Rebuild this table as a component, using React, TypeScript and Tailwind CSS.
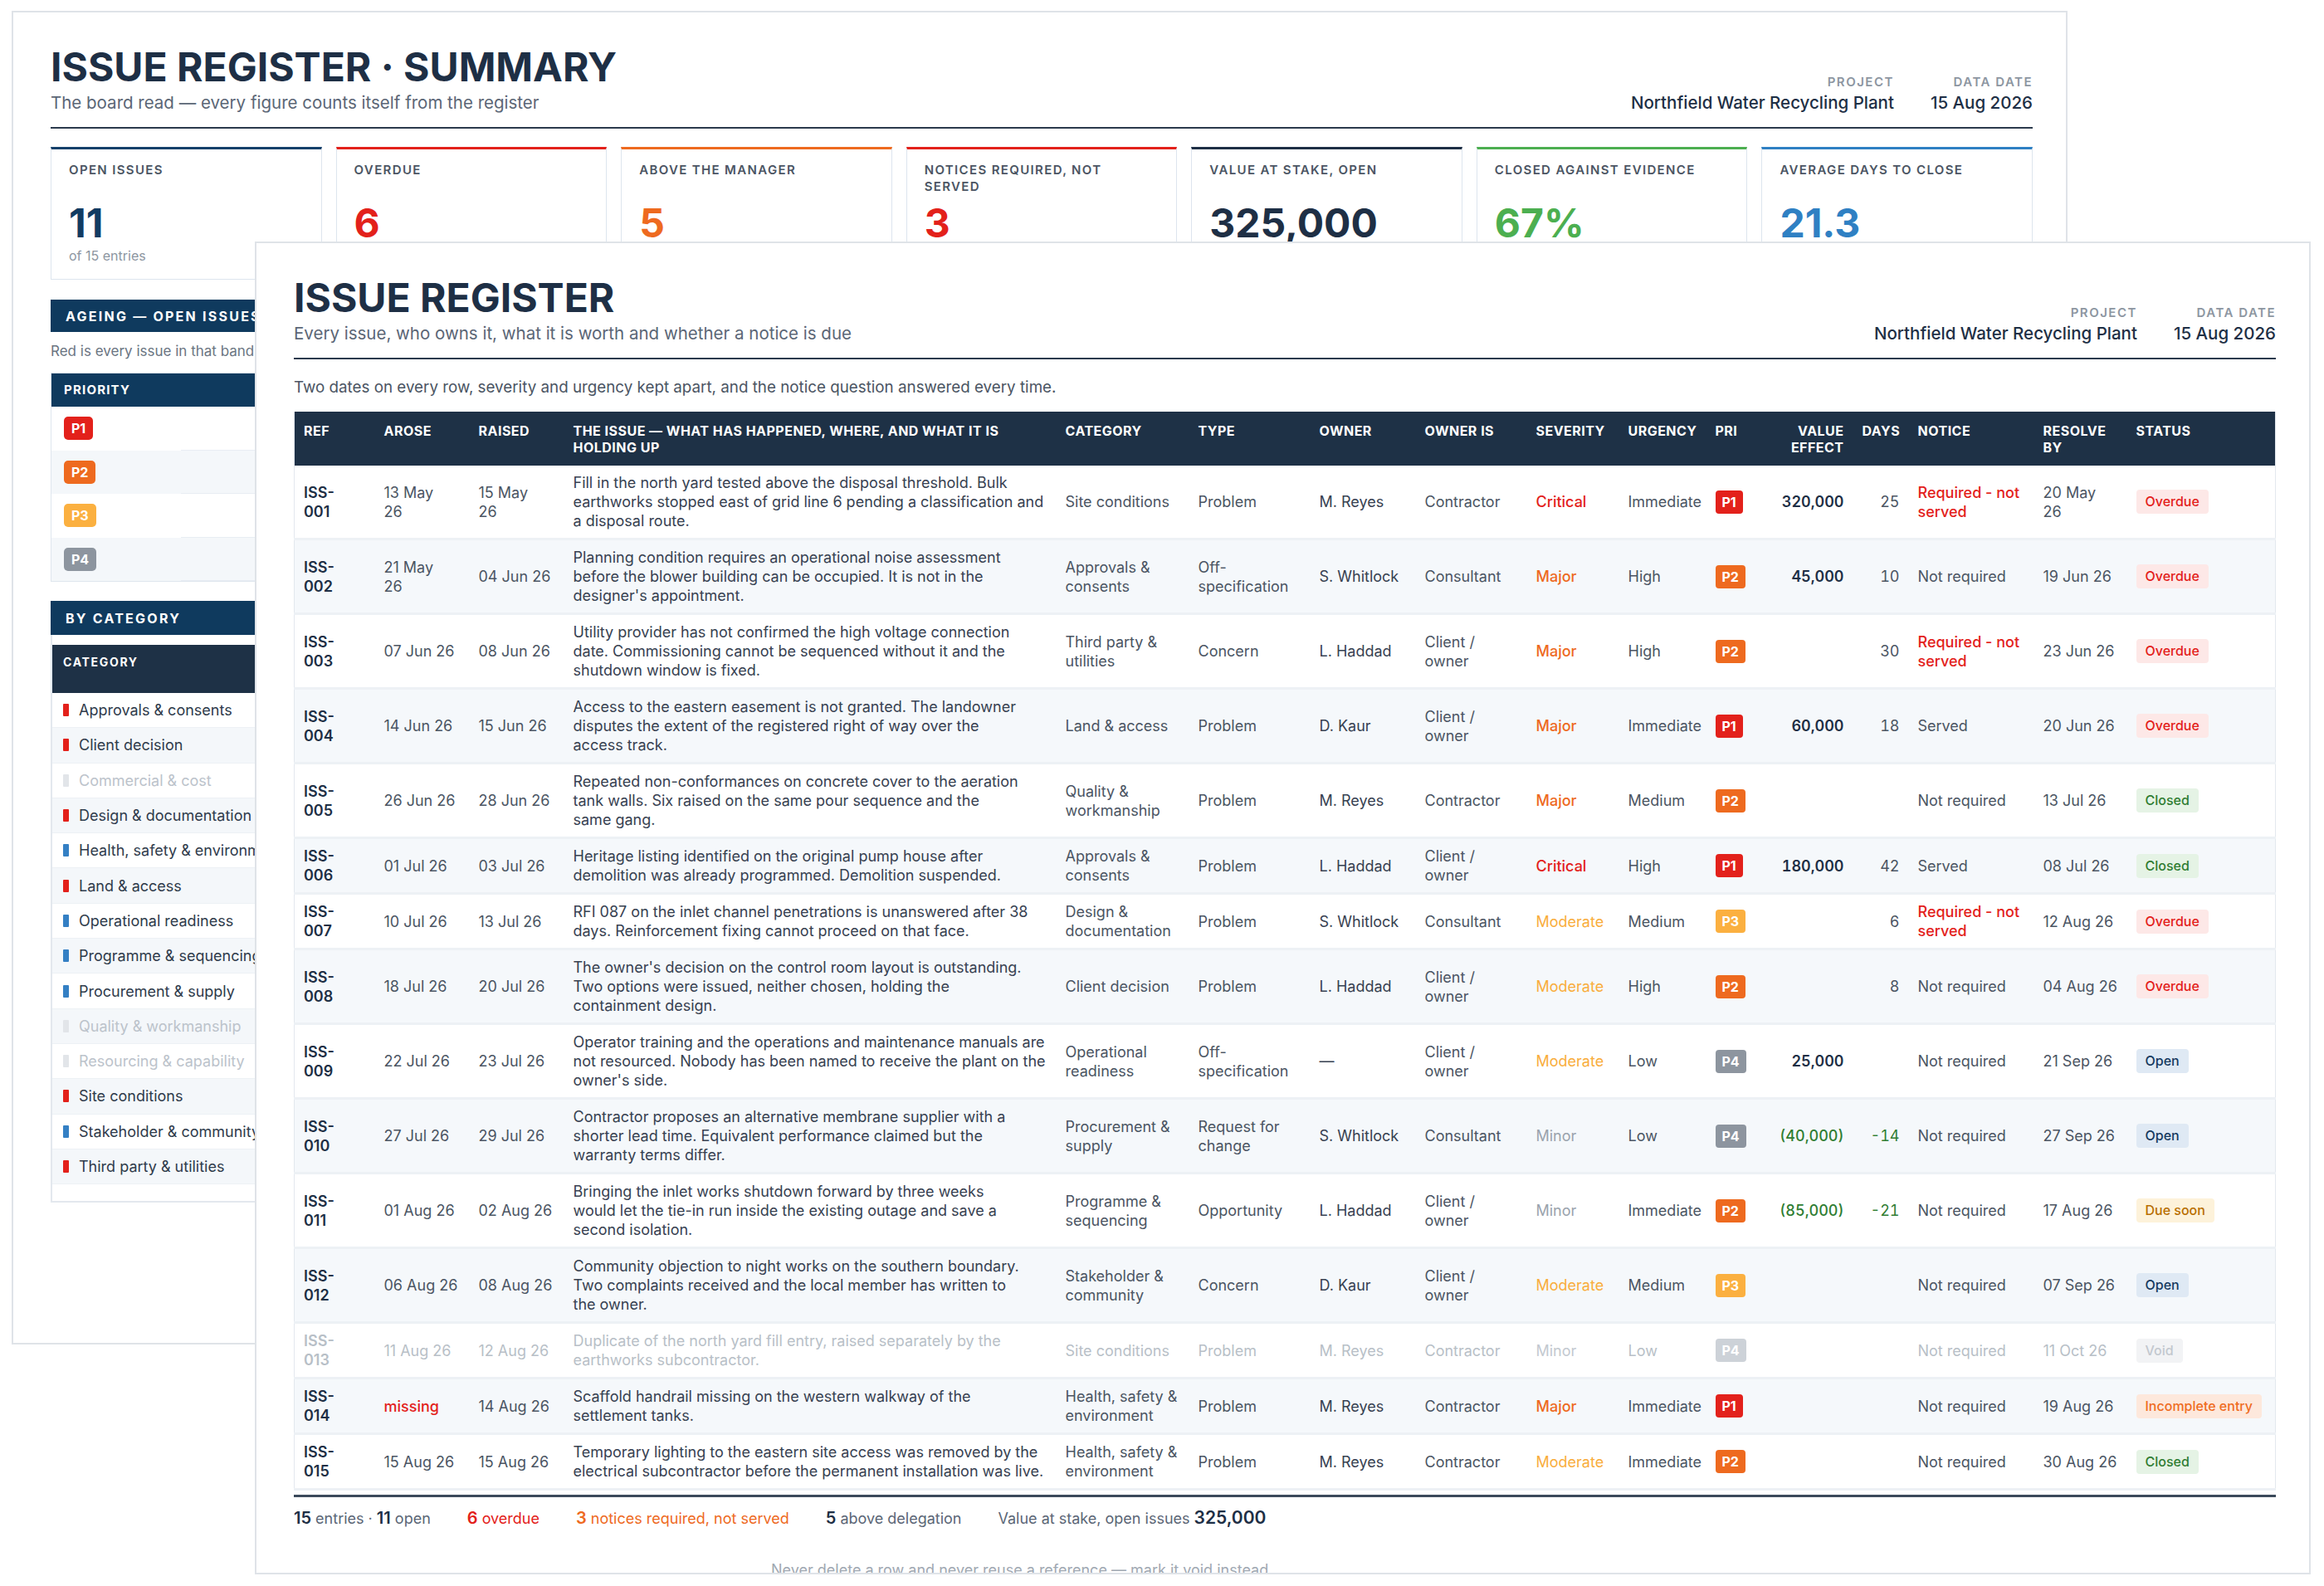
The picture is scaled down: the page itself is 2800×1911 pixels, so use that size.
import React from 'react';

type Sev = 'Critical' | 'Major' | 'Moderate' | 'Minor';
type Pri = 'P1' | 'P2' | 'P3' | 'P4';
type Status = 'Overdue' | 'Closed' | 'Open' | 'Due soon' | 'Void' | 'Incomplete entry';

type Row = {
  ref: string;
  arose: string;
  raised: string;
  issue: string;
  category: string;
  type: string;
  owner: string;
  ownerIs: string;
  severity: Sev;
  urgency: string;
  pri: Pri;
  value: string;
  days: string;
  notice: string;
  resolve: string;
  status: Status;
  isVoid?: boolean;
};

const sevClass: Record<Sev, string> = {
  Critical: 'text-[#e3211b] font-medium',
  Major: 'text-[#ee6a1f] font-medium',
  Moderate: 'text-[#f9ad3c]',
  Minor: 'text-[#9aa3ad]',
};

const priClass: Record<Pri, string> = {
  P1: 'bg-[#e3211b]',
  P2: 'bg-[#ee6a1f]',
  P3: 'bg-[#fbb040]',
  P4: 'bg-[#8d959f]',
};

const statusClass: Record<Status, string> = {
  Overdue: 'bg-[#fde8e7] text-[#e3211b]',
  Closed: 'bg-[#e5f3e5] text-[#2f7d32]',
  Open: 'bg-[#dfe9f4] text-[#163a5f]',
  'Due soon': 'bg-[#fdf2da] text-[#b86e00]',
  Void: 'bg-[#f2f3f5] text-[#c3c8cf]',
  'Incomplete entry': 'bg-[#fde8dc] text-[#ef6c1f]',
};

const rows: Row[] = [
  {
    ref: '001', arose: '13 May\n26', raised: '15 May\n26',
    issue: 'Fill in the north yard tested above the disposal threshold. Bulk\nearthworks stopped east of grid line 6 pending a classification and\na disposal route.',
    category: 'Site conditions', type: 'Problem', owner: 'M. Reyes', ownerIs: 'Contractor',
    severity: 'Critical', urgency: 'Immediate', pri: 'P1', value: '320,000', days: '25',
    notice: 'Required - not\nserved', resolve: '20 May\n26', status: 'Overdue',
  },
  {
    ref: '002', arose: '21 May\n26', raised: '04 Jun 26',
    issue: "Planning condition requires an operational noise assessment\nbefore the blower building can be occupied. It is not in the\ndesigner's appointment.",
    category: 'Approvals &\nconsents', type: 'Off-\nspecification', owner: 'S. Whitlock', ownerIs: 'Consultant',
    severity: 'Major', urgency: 'High', pri: 'P2', value: '45,000', days: '10',
    notice: 'Not required', resolve: '19 Jun 26', status: 'Overdue',
  },
  {
    ref: '003', arose: '07 Jun 26', raised: '08 Jun 26',
    issue: 'Utility provider has not confirmed the high voltage connection\ndate. Commissioning cannot be sequenced without it and the\nshutdown window is fixed.',
    category: 'Third party &\nutilities', type: 'Concern', owner: 'L. Haddad', ownerIs: 'Client /\nowner',
    severity: 'Major', urgency: 'High', pri: 'P2', value: '', days: '30',
    notice: 'Required - not\nserved', resolve: '23 Jun 26', status: 'Overdue',
  },
  {
    ref: '004', arose: '14 Jun 26', raised: '15 Jun 26',
    issue: 'Access to the eastern easement is not granted. The landowner\ndisputes the extent of the registered right of way over the\naccess track.',
    category: 'Land & access', type: 'Problem', owner: 'D. Kaur', ownerIs: 'Client /\nowner',
    severity: 'Major', urgency: 'Immediate', pri: 'P1', value: '60,000', days: '18',
    notice: 'Served', resolve: '20 Jun 26', status: 'Overdue',
  },
  {
    ref: '005', arose: '26 Jun 26', raised: '28 Jun 26',
    issue: 'Repeated non-conformances on concrete cover to the aeration\ntank walls. Six raised on the same pour sequence and the\nsame gang.',
    category: 'Quality &\nworkmanship', type: 'Problem', owner: 'M. Reyes', ownerIs: 'Contractor',
    severity: 'Major', urgency: 'Medium', pri: 'P2', value: '', days: '',
    notice: 'Not required', resolve: '13 Jul 26', status: 'Closed',
  },
  {
    ref: '006', arose: '01 Jul 26', raised: '03 Jul 26',
    issue: 'Heritage listing identified on the original pump house after\ndemolition was already programmed. Demolition suspended.',
    category: 'Approvals &\nconsents', type: 'Problem', owner: 'L. Haddad', ownerIs: 'Client /\nowner',
    severity: 'Critical', urgency: 'High', pri: 'P1', value: '180,000', days: '42',
    notice: 'Served', resolve: '08 Jul 26', status: 'Closed',
  },
  {
    ref: '007', arose: '10 Jul 26', raised: '13 Jul 26',
    issue: 'RFI 087 on the inlet channel penetrations is unanswered after 38\ndays. Reinforcement fixing cannot proceed on that face.',
    category: 'Design &\ndocumentation', type: 'Problem', owner: 'S. Whitlock', ownerIs: 'Consultant',
    severity: 'Moderate', urgency: 'Medium', pri: 'P3', value: '', days: '6',
    notice: 'Required - not\nserved', resolve: '12 Aug 26', status: 'Overdue',
  },
  {
    ref: '008', arose: '18 Jul 26', raised: '20 Jul 26',
    issue: "The owner's decision on the control room layout is outstanding.\nTwo options were issued, neither chosen, holding the\ncontainment design.",
    category: 'Client decision', type: 'Problem', owner: 'L. Haddad', ownerIs: 'Client /\nowner',
    severity: 'Moderate', urgency: 'High', pri: 'P2', value: '', days: '8',
    notice: 'Not required', resolve: '04 Aug 26', status: 'Overdue',
  },
  {
    ref: '009', arose: '22 Jul 26', raised: '23 Jul 26',
    issue: "Operator training and the operations and maintenance manuals are\nnot resourced. Nobody has been named to receive the plant on the\nowner's side.",
    category: 'Operational\nreadiness', type: 'Off-\nspecification', owner: '—', ownerIs: 'Client /\nowner',
    severity: 'Moderate', urgency: 'Low', pri: 'P4', value: '25,000', days: '',
    notice: 'Not required', resolve: '21 Sep 26', status: 'Open',
  },
  {
    ref: '010', arose: '27 Jul 26', raised: '29 Jul 26',
    issue: 'Contractor proposes an alternative membrane supplier with a\nshorter lead time. Equivalent performance claimed but the\nwarranty terms differ.',
    category: 'Procurement &\nsupply', type: 'Request for\nchange', owner: 'S. Whitlock', ownerIs: 'Consultant',
    severity: 'Minor', urgency: 'Low', pri: 'P4', value: '(40,000)', days: '-14',
    notice: 'Not required', resolve: '27 Sep 26', status: 'Open',
  },
  {
    ref: '011', arose: '01 Aug 26', raised: '02 Aug 26',
    issue: 'Bringing the inlet works shutdown forward by three weeks\nwould let the tie-in run inside the existing outage and save a\nsecond isolation.',
    category: 'Programme &\nsequencing', type: 'Opportunity', owner: 'L. Haddad', ownerIs: 'Client /\nowner',
    severity: 'Minor', urgency: 'Immediate', pri: 'P2', value: '(85,000)', days: '-21',
    notice: 'Not required', resolve: '17 Aug 26', status: 'Due soon',
  },
  {
    ref: '012', arose: '06 Aug 26', raised: '08 Aug 26',
    issue: 'Community objection to night works on the southern boundary.\nTwo complaints received and the local member has written to\nthe owner.',
    category: 'Stakeholder &\ncommunity', type: 'Concern', owner: 'D. Kaur', ownerIs: 'Client /\nowner',
    severity: 'Moderate', urgency: 'Medium', pri: 'P3', value: '', days: '',
    notice: 'Not required', resolve: '07 Sep 26', status: 'Open',
  },
  {
    ref: '013', arose: '11 Aug 26', raised: '12 Aug 26',
    issue: 'Duplicate of the north yard fill entry, raised separately by the\nearthworks subcontractor.',
    category: 'Site conditions', type: 'Problem', owner: 'M. Reyes', ownerIs: 'Contractor',
    severity: 'Minor', urgency: 'Low', pri: 'P4', value: '', days: '',
    notice: 'Not required', resolve: '11 Oct 26', status: 'Void', isVoid: true,
  },
  {
    ref: '014', arose: 'missing', raised: '14 Aug 26',
    issue: 'Scaffold handrail missing on the western walkway of the\nsettlement tanks.',
    category: 'Health, safety &\nenvironment', type: 'Problem', owner: 'M. Reyes', ownerIs: 'Contractor',
    severity: 'Major', urgency: 'Immediate', pri: 'P1', value: '', days: '',
    notice: 'Not required', resolve: '19 Aug 26', status: 'Incomplete entry',
  },
  {
    ref: '015', arose: '15 Aug 26', raised: '15 Aug 26',
    issue: 'Temporary lighting to the eastern site access was removed by the\nelectrical subcontractor before the permanent installation was live.',
    category: 'Health, safety &\nenvironment', type: 'Problem', owner: 'M. Reyes', ownerIs: 'Contractor',
    severity: 'Moderate', urgency: 'Immediate', pri: 'P2', value: '', days: '',
    notice: 'Not required', resolve: '30 Aug 26', status: 'Closed',
  },
];

const kpis = [
  { label: 'Open issues', value: '11', sub: 'of 15 entries', top: 'border-t-[#14406a]', color: 'text-[#123b62]' },
  { label: 'Overdue', value: '6', sub: 'past resolve-by date', top: 'border-t-[#e3211b]', color: 'text-[#e3211b]' },
  { label: 'Above the manager', value: '5', sub: 'P1 and P2 open', top: 'border-t-[#ee6a1f]', color: 'text-[#ee6a1f]' },
  { label: 'Notices required, not\nserved', value: '3', sub: 'contract notice due', top: 'border-t-[#e3211b]', color: 'text-[#e3211b]' },
  { label: 'Value at stake, open', value: '325,000', sub: 'net of opportunities', top: 'border-t-[#1e2f45]', color: 'text-[#1e2f45]' },
  { label: 'Closed against evidence', value: '67%', sub: '2 of 3 closed', top: 'border-t-[#4caf50]', color: 'text-[#4caf50]' },
  { label: 'Average days to close', value: '21.3', sub: 'closed issues only', top: 'border-t-[#2f80c3]', color: 'text-[#2f80c3]' },
];

const categories = [
  { name: 'Approvals & consents', mark: 'red' },
  { name: 'Client decision', mark: 'red' },
  { name: 'Commercial & cost', mark: 'none' },
  { name: 'Design & documentation', mark: 'red' },
  { name: 'Health, safety & environment', mark: 'blue' },
  { name: 'Land & access', mark: 'red' },
  { name: 'Operational readiness', mark: 'blue' },
  { name: 'Programme & sequencing', mark: 'blue' },
  { name: 'Procurement & supply', mark: 'blue' },
  { name: 'Quality & workmanship', mark: 'none' },
  { name: 'Resourcing & capability', mark: 'none' },
  { name: 'Site conditions', mark: 'red' },
  { name: 'Stakeholder & community', mark: 'blue' },
  { name: 'Third party & utilities', mark: 'red' },
];

const markClass: Record<string, string> = {
  red: 'bg-[#e3211b]',
  blue: 'bg-[#3480c4]',
  none: 'bg-[#e2e5e9]',
};

const colWidths = [
  'w-[97px]', 'w-[114px]', 'w-[114px]', 'w-[593px]', 'w-[160px]', 'w-[146px]', 'w-[127px]', 'w-[134px]',
  'w-[111px]', 'w-[105px]', 'w-[58px]', 'w-[119px]', 'w-[67px]', 'w-[151px]', 'w-[112px]', 'w-[179px]',
];

const headers = [
  'Ref', 'Arose', 'Raised', 'The issue — what has happened, where, and what it is\nholding up', 'Category', 'Type',
  'Owner', 'Owner is', 'Severity', 'Urgency', 'Pri', 'Value\neffect', 'Days', 'Notice', 'Resolve\nby', 'Status',
];

function Meta({ label, value }: { label: string; value: string }) {
  return (
    <div className="text-right">
      <div className="mb-[3px] text-[15px] font-semibold uppercase leading-[16px] tracking-[0.1em] text-[#8d96a1]">{label}</div>
      <div className="text-[20.5px] font-medium leading-[28px] text-[#1e2f45]">{value}</div>
    </div>
  );
}

function PageHeader({ title, subtitle }: { title: string; subtitle: string }) {
  return (
    <div className="flex items-end justify-between border-b-2 border-[#2b3a4d] pb-[15px]">
      <div>
        <h1 className="text-[48px] font-bold leading-[48px] text-[#1e2f45]">{title}</h1>
        <p className="mt-[5px] text-[20.5px] leading-[28px] text-[#5b6676]">{subtitle}</p>
      </div>
      <div className="flex gap-[44px]">
        <Meta label="Project" value="Northfield Water Recycling Plant" />
        <Meta label="Data date" value="15 Aug 2026" />
      </div>
    </div>
  );
}

function PriBadge({ pri, muted }: { pri: Pri; muted?: boolean }) {
  return (
    <span
      className={`inline-flex h-[28px] items-center rounded-[4px] px-[8px] text-[16px] font-bold leading-none text-white ${
        muted ? 'bg-[#cdd2d8]' : priClass[pri]
      }`}
    >
      {pri}
    </span>
  );
}

function Summary() {
  return (
    <section className="absolute left-[14px] top-[13px] h-[1607px] w-[2477px] border-2 border-[#dfe3e8] bg-white pl-[45px] pr-[40px] pt-[42px]">
      <PageHeader title="ISSUE REGISTER · SUMMARY" subtitle="The board read — every figure counts itself from the register" />

      {/* KPI strip */}
      <div className="mt-[22px] grid grid-cols-7 gap-[17px]">
        {kpis.map((k) => (
          <div key={k.label} className={`border border-t-[3px] border-[#dde5ee] px-[21px] pb-[18px] pt-[15px] ${k.top}`}>
            <div className="min-h-[40px] whitespace-pre-line text-[15px] font-semibold uppercase leading-[20px] tracking-[0.09em] text-[#4b5563]">
              {k.label}
            </div>
            <div className={`mt-[10px] text-[48px] font-bold leading-[48px] ${k.color}`}>{k.value}</div>
            <div className="mt-[5px] text-[16px] leading-[20px] text-[#8d96a1]">{k.sub}</div>
          </div>
        ))}
      </div>

      {/* Ageing and category */}
      <div className="mt-[24px] w-[640px]">
        <div className="flex h-[39px] items-center bg-[#0f3a5e] pl-[18px] text-[16px] font-bold tracking-[0.14em] text-white">
          AGEING — OPEN ISSUES
        </div>
        <p className="mt-[13px] text-[17px] leading-[20px] text-[#6b7582]">Red is every issue in that band</p>
        <div className="mt-[16px] border border-[#dfe6ee]">
          <div className="flex h-[40px] items-center bg-[#0f3a5e] pl-[15px] text-[15px] font-bold tracking-[0.08em] text-white">
            PRIORITY
          </div>
          {(['P1', 'P2', 'P3', 'P4'] as Pri[]).map((p, i) => (
            <div key={p} className={`flex h-[52.5px] ${i % 2 ? 'bg-[#f4f7fa]' : 'bg-white'}`}>
              <div className="flex w-[156px] items-center pl-[15px]">
                <span className={`inline-flex h-[28px] items-center rounded-[5px] px-[9px] text-[16px] font-bold text-white ${priClass[p]}`}>
                  {p}
                </span>
              </div>
              <div className="flex-1 border-b border-[#e8edf3]" />
            </div>
          ))}
        </div>

        <div className="mt-[23px] flex h-[41px] items-center bg-[#0f3a5e] pl-[18px] text-[16px] font-bold tracking-[0.14em] text-white">
          BY CATEGORY
        </div>
        <div className="border-b-2 border-l-2 border-[#e3e8ee] pb-[20px] pt-[12px]">
          <div className="h-[58px] bg-[#1e3146] pl-[13px] pt-[11px] text-[14px] font-bold leading-[20px] tracking-[0.12em] text-white">
            CATEGORY
          </div>
          {categories.map((c, i) => (
            <div
              key={c.name}
              className={`flex h-[42.3px] items-center gap-[12px] border-b border-[#edf1f5] pl-[13px] text-[18px] ${
                i % 2 ? 'bg-[#f4f7fa]' : 'bg-white'
              } ${c.mark === 'none' ? 'text-[#bcc3cb]' : 'text-[#2f3b4b]'}`}
            >
              <span className={`h-[15px] w-[7px] shrink-0 rounded-[1px] ${markClass[c.mark]}`} />
              <span className="whitespace-nowrap">{c.name}</span>
            </div>
          ))}
        </div>
      </div>
    </section>
  );
}

function RegisterRow({ r, i }: { r: Row; i: number }) {
  const v = r.isVoid;
  const base = v ? 'text-[#b8bfc7]' : 'text-[#4b5563]';
  const neg = r.value.startsWith('(');
  const td = 'whitespace-pre px-[11px] py-[9px] align-middle';
  return (
    <tr className={`border-b-[3px] border-[#edf1f5] ${i % 2 ? 'bg-[#f5f8fb]' : 'bg-white'}`}>
      <td className={`${td} font-semibold ${v ? 'text-[#b8bfc7]' : 'text-[#1e2f45]'}`}>{`ISS-\n${r.ref}`}</td>
      <td className={`${td} ${r.arose === 'missing' ? 'font-medium text-[#e3211b]' : base}`}>{r.arose}</td>
      <td className={`${td} ${base}`}>{r.raised}</td>
      <td className={`${td} ${v ? 'text-[#b8bfc7]' : 'text-[#374151]'}`}>{r.issue}</td>
      <td className={`${td} ${base}`}>{r.category}</td>
      <td className={`${td} ${base}`}>{r.type}</td>
      <td className={`${td} ${v ? 'text-[#b8bfc7]' : 'text-[#374151]'}`}>{r.owner}</td>
      <td className={`${td} ${base}`}>{r.ownerIs}</td>
      <td className={`${td} ${v ? 'text-[#c3c9d0]' : sevClass[r.severity]}`}>{r.severity}</td>
      <td className={`${td} ${base}`}>{r.urgency}</td>
      <td className={td}>
        <PriBadge pri={r.pri} muted={v} />
      </td>
      <td className={`${td} text-right tabular-nums ${neg ? 'font-medium text-[#2f7d32]' : 'font-semibold text-[#1e2f45]'}`}>
        {r.value}
      </td>
      <td className={`${td} text-right tabular-nums ${r.days.startsWith('-') ? 'text-[#2f7d32]' : base}`}>{r.days}</td>
      <td className={`${td} ${r.notice.startsWith('Required') ? 'font-medium text-[#e3211b]' : base}`}>{r.notice}</td>
      <td className={`${td} ${base}`}>{r.resolve}</td>
      <td className={td}>
        <span className={`inline-flex h-[29px] items-center rounded-[4px] px-[11px] text-[16px] font-medium ${statusClass[r.status]}`}>
          {r.status}
        </span>
      </td>
    </tr>
  );
}

function Register() {
  return (
    <section className="absolute left-[307px] top-[291px] h-[1606px] w-[2477px] overflow-hidden border-2 border-[#dfe3e8] bg-white pl-[45px] pr-[40px] pt-[42px]">
      <PageHeader title="ISSUE REGISTER" subtitle="Every issue, who owns it, what it is worth and whether a notice is due" />

      <p className="mt-[22px] text-[18.8px] leading-[24px] text-[#4b5563]">
        Two dates on every row, severity and urgency kept apart, and the notice question answered every time.
      </p>

      <div className="mt-[17px] border-b-[3px] border-[#3b4a5b] pb-[5px]">
        <table className="w-full table-fixed border-collapse border-x border-[#e3e8ee] text-left text-[18px] leading-[23px]">
          <colgroup>
            {colWidths.map((w, i) => (
              <col key={i} className={w} />
            ))}
          </colgroup>
          <thead>
            <tr className="bg-[#1e3146]">
              {headers.map((h, i) => (
                <th
                  key={h}
                  className={`whitespace-pre-line px-[11px] pb-[12px] pt-[13px] align-top text-[16px] font-bold uppercase leading-[20px] tracking-[0.03em] text-white ${
                    i === 11 || i === 12 ? 'text-right' : 'text-left'
                  }`}
                >
                  {h}
                </th>
              ))}
            </tr>
          </thead>
          <tbody>
            {rows.map((r, i) => (
              <RegisterRow key={r.ref} r={r} i={i} />
            ))}
          </tbody>
        </table>
      </div>

      {/* Totals line */}
      <div className="mt-[11px] flex items-baseline gap-[44px] text-[18px] leading-[28px] text-[#5b6676]">
        <span>
          <b className="text-[20px] font-semibold text-[#1e2f45]">15</b> entries ·{' '}
          <b className="text-[20px] font-semibold text-[#1e2f45]">11</b> open
        </span>
        <span className="text-[#e3211b]">
          <b className="text-[20px] font-semibold">6</b> overdue
        </span>
        <span className="text-[#ee6a1f]">
          <b className="text-[20px] font-semibold">3</b> notices required, not served
        </span>
        <span>
          <b className="text-[20px] font-semibold text-[#1e2f45]">5</b> above delegation
        </span>
        <span>
          Value at stake, open issues <b className="text-[21px] font-semibold text-[#1e2f45]">325,000</b>
        </span>
      </div>

      <p className="ml-[575px] mt-[37px] text-[18px] leading-[22px] text-[#a0a8b2]">
        Never delete a row and never reuse a reference — mark it void instead.
      </p>
    </section>
  );
}

export default function App() {
  return (
    <div className="relative h-[1911px] w-[2800px] overflow-hidden bg-white font-['Inter','Noto_Sans',sans-serif]">
      <Summary />
      <Register />
    </div>
  );
}
